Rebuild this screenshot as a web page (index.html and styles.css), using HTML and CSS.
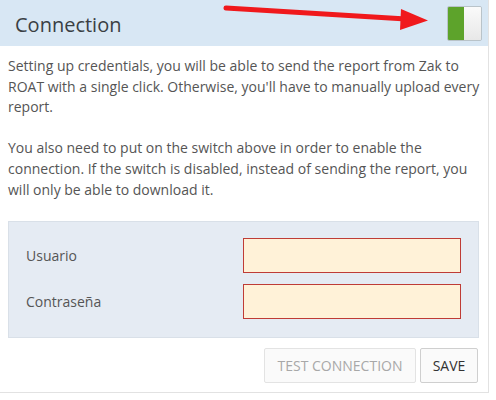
FILE: index.html
```html
<!DOCTYPE html>
<html lang="en">
<head>
    <meta charset="UTF-8">
    <meta name="viewport" content="width=device-width, initial-scale=1.0">
    <title>Connection</title>
    <link rel="stylesheet" href="styles.css">
</head>
<body>
    <div class="card">
        <div class="card-header">
            <h2>Connection</h2>
            <svg class="arrow" width="440" height="46" viewBox="0 0 440 46">
                <line x1="226" y1="8" x2="406" y2="19" stroke="#f0191c" stroke-width="5" stroke-linecap="round"/>
                <polygon points="401,9 428,20.5 400,30" fill="#f0191c"/>
            </svg>
            <span class="switch"><span class="switch-on"></span><span class="switch-off"></span></span>
        </div>
        <div class="card-body">
            <p>Setting up credentials, you will be able to send the report from Zak to<br>ROAT with a single click. Otherwise, you'll have to manually upload every<br>report.</p>
            <p>You also need to put on the switch above in order to enable the<br>connection. If the switch is disabled, instead of sending the report, you<br>will only be able to download it.</p>

            <form class="credentials">
                <div class="row">
                    <label for="user">Usuario</label>
                    <input type="text" id="user">
                </div>
                <div class="row">
                    <label for="pass">Contraseña</label>
                    <input type="password" id="pass">
                </div>
            </form>

            <div class="actions">
                <button class="btn btn-disabled" type="button">Test connection</button>
                <button class="btn btn-save" type="button">Save</button>
            </div>
        </div>
    </div>
</body>
</html>
```

FILE: styles.css
```css
body {
    margin: 0;
    padding: 0;
    background-color: #fff;
    font-family: "Open Sans", "Noto Sans", sans-serif;
    color: #555;
}

.card {
    width: 489px;
    height: 393px;
    box-sizing: border-box;
    border-right: 1px solid #e2e2e2;
    border-bottom: 1px solid #e2e2e2;
}

.card-header {
    position: relative;
    height: 46px;
    box-sizing: border-box;
    background-color: #d8e7f4;
    display: flex;
    align-items: center;
    justify-content: space-between;
    padding: 3px 6px 0 15px;
}

.card-header h2 {
    margin: 0;
    font-size: 20px;
    font-weight: normal;
    color: #3a3f44;
}

.arrow {
    position: absolute;
    left: 0;
    top: 0;
}

.switch {
    display: flex;
    width: 35px;
    height: 35px;
    margin-top: -3px;
    box-sizing: border-box;
    border: 1px solid #b9c3c9;
    border-radius: 2px;
    overflow: hidden;
}

.switch-on {
    flex: 1;
    background-color: #5da32b;
}

.switch-off {
    width: 17px;
    background: linear-gradient(#fafafa, #e8e8e8);
}

.card-body {
    padding: 10px 9px 0 8px;
}

.card-body p {
    margin: 0 0 20.6px 0;
    font-size: 14px;
    line-height: 20.6px;
    white-space: nowrap;
}

.credentials {
    background-color: #e5ebf3;
    border: 1px solid #d9e0e8;
    padding: 16px 17px 18px 17px;
    display: flex;
    flex-direction: column;
    gap: 11px;
}

.row {
    display: flex;
    align-items: center;
    justify-content: space-between;
}

label {
    font-size: 14px;
    color: #555;
}

input {
    width: 218px;
    height: 35px;
    box-sizing: border-box;
    background-color: #fff2d8;
    border: 1px solid #bf3c36;
    border-radius: 0;
    outline: none;
}

.actions {
    display: flex;
    justify-content: flex-end;
    gap: 4px;
    margin-top: 10px;
    padding-right: 1px;
}

.btn {
    height: 35px;
    padding: 0;
    font-family: "Open Sans", "Noto Sans", sans-serif;
    font-size: 14px;
    text-transform: uppercase;
    color: #333;
    background-color: #fafafa;
    border: 1px solid #cfcfcf;
    border-radius: 2px;
}

.btn-disabled {
    width: 152px;
    color: #a8a8a8;
    border-color: #e3e3e3;
}

.btn-save {
    width: 58px;
}
```
